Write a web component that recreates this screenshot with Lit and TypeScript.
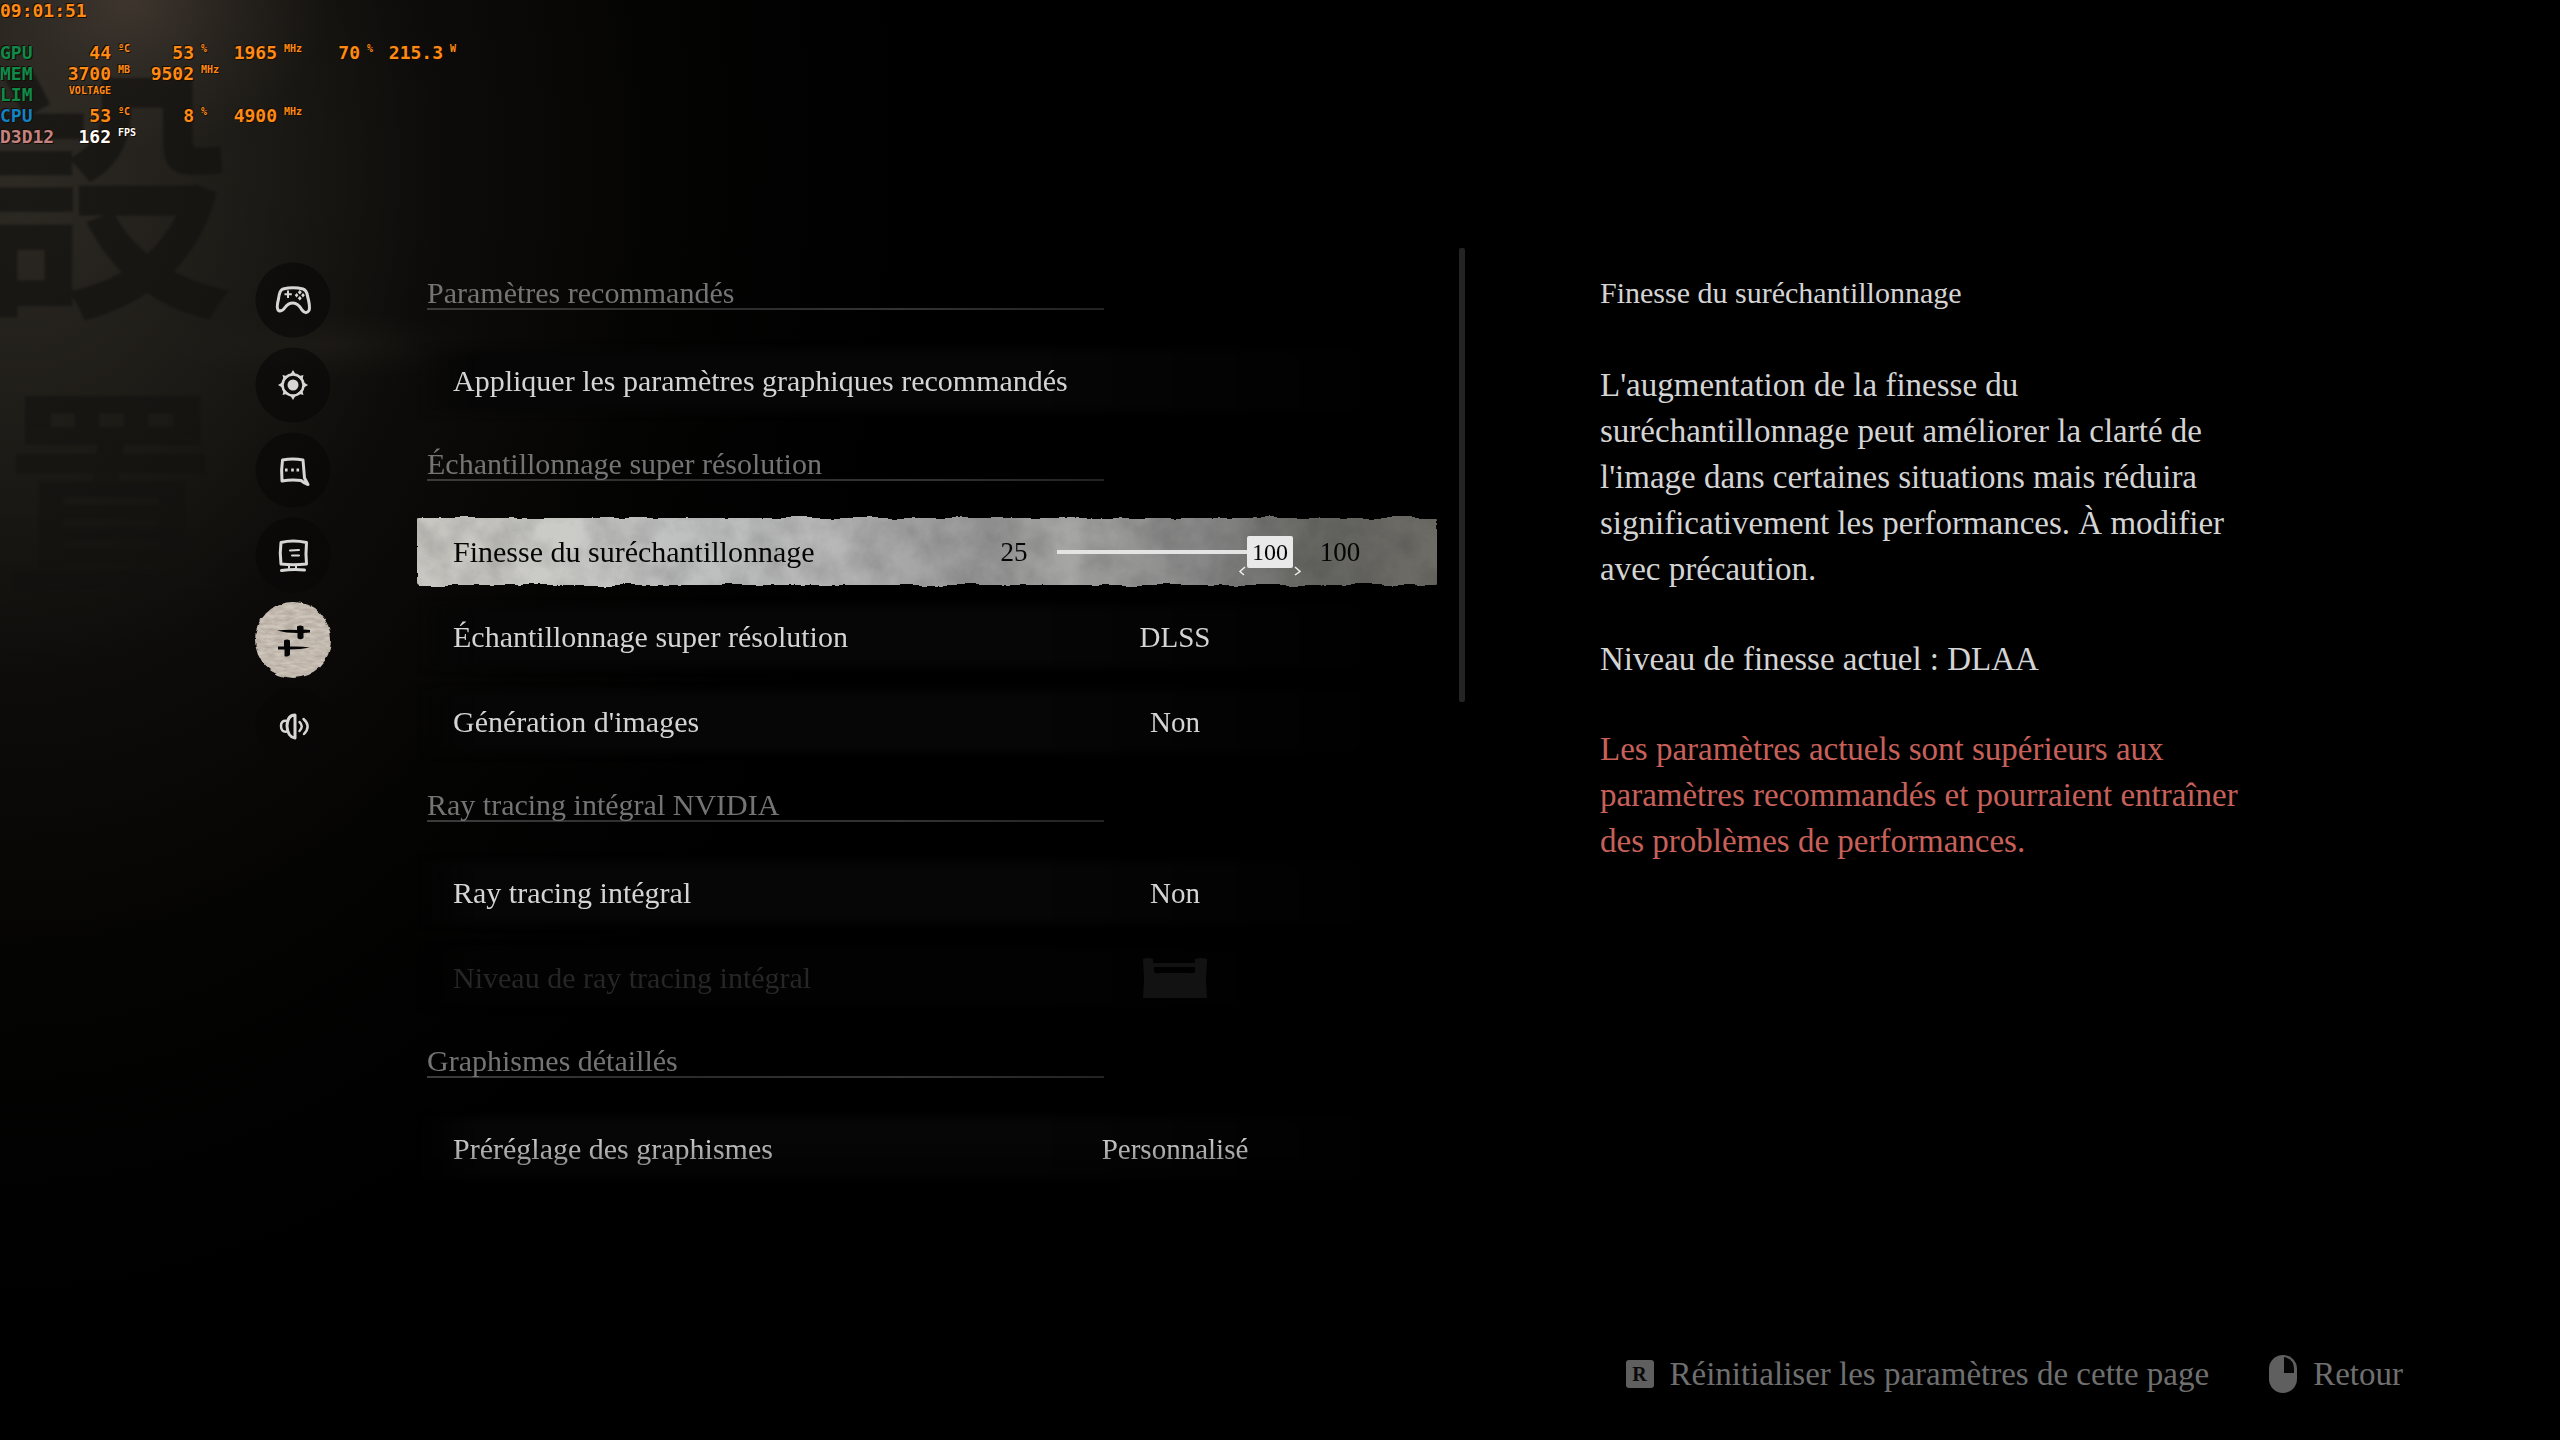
import { LitElement, html, svg, css, nothing } from "lit";
import { customElement, property, state } from "lit/decorators.js";

type Cell = [value: string, unit: string, small?: boolean] | null;

interface HudRow {
  label: string;
  tone: string;
  cells: Cell[];
}

const HUD_ROWS: HudRow[] = [
  { label: "GPU", tone: "green", cells: [["44", "ºC"], ["53", "%"], ["1965", "MHz"], ["70", "%"], ["215.3", "W"]] },
  { label: "MEM", tone: "green", cells: [["3700", "MB"], ["9502", "MHz"], null, null, null] },
  { label: "LIM", tone: "green", cells: [["VOLTAGE", "", true], null, null, null, null] },
  { label: "CPU", tone: "blue", cells: [["53", "ºC"], ["8", "%"], ["4900", "MHz"], null, null] },
  { label: "D3D12", tone: "pink", cells: [["162", "FPS"], null, null, null, null] },
];

type Entry =
  | { kind: "heading"; label: string }
  | { kind: "action"; label: string }
  | { kind: "slider"; label: string; min: number; max: number; value: number }
  | { kind: "choice"; label: string; value: string }
  | { kind: "locked"; label: string };

const ENTRIES: Entry[] = [
  { kind: "heading", label: "Paramètres recommandés" },
  { kind: "action", label: "Appliquer les paramètres graphiques recommandés" },
  { kind: "heading", label: "Échantillonnage super résolution" },
  { kind: "slider", label: "Finesse du suréchantillonnage", min: 25, max: 100, value: 100 },
  { kind: "choice", label: "Échantillonnage super résolution", value: "DLSS" },
  { kind: "choice", label: "Génération d'images", value: "Non" },
  { kind: "heading", label: "Ray tracing intégral NVIDIA" },
  { kind: "choice", label: "Ray tracing intégral", value: "Non" },
  { kind: "locked", label: "Niveau de ray tracing intégral" },
  { kind: "heading", label: "Graphismes détaillés" },
  { kind: "choice", label: "Préréglage des graphismes", value: "Personnalisé" },
];

const ICONS = [
  svg`<g fill="none" stroke="currentColor" stroke-width="3" stroke-linejoin="round">
      <path d="M28 27Q38 24.500 48 27Q51.500 28 52.500 34Q55.500 45 54 48.500Q51 53 47 48Q43 41 38 41Q33 41 30 45.500Q27 50 23.500 48.500Q21 46.500 23.500 37Q24.500 28 28 27Z"/>
      <path stroke-width="2" d="M33 28.500V36M29.500 32.200H36.800"/></g>
    <path fill="currentColor" d="M44.800 28l2 2.200-2 2.200-2-2.200zM44.800 34l2 2.200-2 2.200-2-2.200zM41.600 31l1.800 2.200-1.800 2.200-1.800-2.200zM48 31l1.800 2.200-1.800 2.200-1.800-2.200z"/>`,
  svg`<circle cx="38" cy="38" r="10.500" fill="none" stroke="currentColor" stroke-width="2.500"/>
    <circle cx="38" cy="38" r="5.500" fill="currentColor"/>
    <path fill="currentColor" d="M38 23l3 5h-6zM38 53l3-5h-6zM23 38l5-3v6zM53 38l-5-3v6zM27.500 28l6 1.500-4.500 4.500zM48.500 28l-6 1.500 4.500 4.500zM27.500 48l6-1.500-4.500-4.500zM48.500 48l-6-1.500 4.500-4.500z"/>`,
  svg`<path fill="none" stroke="currentColor" stroke-width="3" stroke-linejoin="round" d="M27.500 28Q38 26 48 28L49.500 46L53 52.500Q49 51 46 48.500Q36 47.500 27 49Q26 38 27.500 28Z"/>
    <path fill="currentColor" d="M30 36.500h2.600v3H30zM36.200 36.500h2.600v3h-2.600zM41.500 36.500h2.600v3h-2.600z"/>`,
  svg`<g fill="none" stroke="currentColor" stroke-linecap="round" stroke-linejoin="round">
      <path stroke-width="3" d="M26 25.500Q38 22.500 51.500 25.500Q50.500 37 51.500 47Q38 48.500 26 47Q24.500 36 26 25.500Z"/>
      <path stroke-width="2" d="M35 33.500L44 33M37 38.500H44M34 48v3M41 48v3"/>
      <path stroke-width="3" d="M26.500 53.500Q38 52 49.500 53"/></g>`,
  svg`<g fill="currentColor"><path d="M22 28.500Q31 27.500 42 28V24.500Q45 22.500 48.500 24.500V27.500L55 28V30.500L48.500 31V36Q45 38.500 42.500 36V31Q31 31 22 28.500Z"/>
      <path d="M23 44.500L29 44.500V38.500Q32 36.500 35 38.500V44.500Q46 44 55 45.500Q46 47.500 35 47.500V53Q32 55.500 29.500 54V47.500L23 47.500Z"/></g>`,
  svg`<g fill="none" stroke="currentColor" stroke-linecap="round" stroke-linejoin="round">
      <path stroke-width="2.500" d="M32 34Q26 33 26 39Q26 45.500 32 44.500"/>
      <path stroke-width="3" d="M40 28Q32.500 28 32 39Q32.500 50 40 51Z"/>
      <path stroke-width="2.500" d="M44.500 35Q49 39 44.500 44M48.500 32Q56.500 39 49 47"/></g>`,
];

/** Performance overlay drawn in the top left corner. */
@customElement("perf-overlay")
export class PerfOverlay extends LitElement {
  static styles = css`
    :host {
      display: block;
      font: bold 18px/21px "DejaVu Sans Mono", "Liberation Mono", monospace;
      color: #ff8a14;
      text-shadow: 1px 1px 0 #160c02, -1px -1px 0 #160c02;
    }
    .clock {
      display: block;
      height: 42px;
    }
    .grid {
      border-collapse: collapse;
      table-layout: fixed;
      width: 471px;
    }
    .label-col { width: 56px; }
    .value-col { width: 55px; }
    .unit-col { width: 28px; }
    th, td {
      padding: 0;
      height: 21px;
      white-space: nowrap;
      vertical-align: top;
    }
    th { text-align: left; font-weight: bold; }
    .value { text-align: right; }
    .unit, .small {
      font-size: 10px;
      line-height: 14px;
    }
    .unit { padding-left: 7px; }
    .green { color: #0e8a4a; }
    .blue { color: #1282c4; }
    .pink { color: #c48484; }
    .white { color: #fff; }
  `;

  render() {
    return html`
      <time class="clock">09:01:51</time>
      <table class="grid">
        <colgroup>
          <col class="label-col" />
          ${[0, 1, 2, 3, 4].map(() => html`<col class="value-col" /><col class="unit-col" />`)}
        </colgroup>
        <tbody>
          ${HUD_ROWS.map(
            (row) => html`<tr class=${row.tone === "pink" ? "white" : ""}>
              <th scope="row" class=${row.tone}>${row.label}</th>
              ${row.cells.map((c) =>
                c
                  ? html`<td class="value ${c[2] ? "small" : ""}">${c[0]}</td><td class="unit">${c[1]}</td>`
                  : html`<td></td><td></td>`
              )}
            </tr>`
          )}
        </tbody>
      </table>
    `;
  }
}

/** Round category button; the selected one sits on a paper disc. */
@customElement("category-button")
export class CategoryButton extends LitElement {
  @property({ type: Number }) icon = 0;
  @property({ type: Boolean }) active = false;

  static styles = css`
    :host { display: block; }
    .button {
      display: block;
      width: 76px;
      height: 76px;
      padding: 0;
      border: 0;
      background: none;
      color: #d6d6d4;
      cursor: pointer;
    }
    .button.active { color: #050505; }
    .art { display: block; width: 76px; height: 76px; overflow: visible; }
  `;

  render() {
    return html`<button class="button ${this.active ? "active" : ""}" aria-pressed=${this.active}>
      <svg class="art" viewBox="0 0 76 76" aria-hidden="true">
        <defs>
          <filter id="disc" x="-5%" y="-5%" width="110%" height="110%" color-interpolation-filters="sRGB">
            <feTurbulence type="fractalNoise" baseFrequency="0.1" numOctaves="3" seed="4" result="n" />
            <feDisplacementMap in="SourceGraphic" in2="n" scale="4" xChannelSelector="R" yChannelSelector="G" result="d" />
            <feTurbulence type="fractalNoise" baseFrequency="0.1 0.3" numOctaves="3" seed="9" result="g" />
            <feColorMatrix in="g" values="0 0 0 0 0.35  0 0 0 0 0.3  0 0 0 0 0.26  0.4 0 0 0 -0.1" result="t" />
            <feComposite in="t" in2="d" operator="in" result="tt" />
            <feMerge><feMergeNode in="d" /><feMergeNode in="tt" /></feMerge>
          </filter>
        </defs>
        ${this.active
          ? svg`<circle cx="38" cy="38" r="38" fill="#cfc6bc" filter="url(#disc)"/>`
          : svg`<circle cx="38" cy="38" r="37.500" fill="#080706" opacity="0.6"/>`}
        ${ICONS[this.icon]}
      </svg>
    </button>`;
  }
}

/** List of settings with its headings, rows and controls. */
@customElement("settings-list")
export class SettingsList extends LitElement {
  @state() private level = 100;

  static styles = css`
    :host {
      display: block;
      font: 30px/40px "Liberation Serif", serif;
      color: #d4d4d4;
    }
    .list {
      display: flex;
      flex-direction: column;
      mask-image: linear-gradient(#000 0, #000 884px, rgba(0, 0, 0, 0.45) 930px);
    }
    .heading {
      box-sizing: border-box;
      height: 86px;
      margin: 0;
      padding: 26px 0 0 10px;
      font: inherit;
      line-height: 30px;
      color: #747474;
    }
    .heading::after {
      content: "";
      display: block;
      width: 67%;
      height: 2px;
      background: linear-gradient(90deg, #3c3c3c, #2b2b2b 40%, #333 70%, #222);
    }
    .row {
      position: relative;
      display: flex;
      align-items: center;
      box-sizing: border-box;
      height: 85px;
      padding: 0 74px 0 36px;
    }
    .row::before {
      content: "";
      position: absolute;
      inset: 12px 0;
      background: linear-gradient(90deg, transparent, #060606 6%, #060606 60%, transparent 96%);
      filter: blur(4px);
    }
    .row.selected { color: #050505; }
    .row.selected::before { display: none; }
    .row.locked { color: #262626; }
    .row.locked::before { opacity: 0.4; }
    .paper {
      position: absolute;
      inset: 9px 0;
      width: 100%;
      height: 67px;
      overflow: visible;
    }
    .label { position: relative; flex: 1; }
    .action, .choice, .lock {
      position: relative;
      padding: 0;
      border: 0;
      background: none;
      color: inherit;
      font: inherit;
    }
    .action { text-align: left; cursor: pointer; }
    .choice {
      appearance: none;
      width: 376px;
      font-size: 29px;
      text-align: center;
      text-align-last: center;
      cursor: pointer;
    }
    .choice option { color: #d4d4d4; background: #000; }
    .lock {
      display: flex;
      justify-content: center;
      width: 376px;
      color: #121212;
    }
    .slider {
      position: relative;
      display: grid;
      grid-template-columns: 54px 236px 46px;
      column-gap: 16px;
      width: 376px;
      font-size: 27px;
      text-align: center;
    }
    .slider .max { margin-left: 8px; margin-right: -8px; }
    .track { position: relative; display: flex; align-items: center; }
    .range {
      appearance: none;
      width: 100%;
      height: 32px;
      margin: 0;
      background: linear-gradient(#e4e4e4, #e4e4e4) center / 100% 4px no-repeat;
      cursor: pointer;
    }
    .range::-webkit-slider-thumb {
      appearance: none;
      width: 46px;
      height: 32px;
      background: #e9e9e9;
      border-radius: 2px;
    }
    .bubble {
      position: absolute;
      width: 46px;
      font-size: 24px;
      line-height: 32px;
      transform: translateX(-50%);
      pointer-events: none;
    }
    .arrows {
      position: absolute;
      top: 16px;
      left: -8px;
      width: 62px;
      height: 24px;
      overflow: visible;
    }
  `;

  private renderPaper() {
    return html`<svg class="paper" aria-hidden="true">
      <defs>
        <linearGradient id="tone">
          <stop offset="0" stop-color="#c8c7c1" />
          <stop offset="0.15" stop-color="#cbcbc8" />
          <stop offset="0.26" stop-color="#bfc0c0" />
          <stop offset="0.4" stop-color="#b9b9b9" />
          <stop offset="0.56" stop-color="#959595" />
          <stop offset="0.64" stop-color="#a6a6a5" />
          <stop offset="0.78" stop-color="#858585" />
          <stop offset="0.88" stop-color="#676763" />
          <stop offset="1" stop-color="#6d6c66" />
        </linearGradient>
        <filter id="rough" x="-1%" y="-10%" width="102%" height="120%" color-interpolation-filters="sRGB">
          <feTurbulence type="fractalNoise" baseFrequency="0.03 0.03" numOctaves="5" seed="7" result="n" />
          <feDisplacementMap in="SourceGraphic" in2="n" scale="8" xChannelSelector="R" yChannelSelector="G" result="d" />
          <feTurbulence type="fractalNoise" baseFrequency="0.03 0.03" numOctaves="6" seed="12" result="g" />
          <feColorMatrix in="g" values="0 0 0 0 0.1  0 0 0 0 0.1  0 0 0 0 0.1  0.3 0 0 0 -0.1" result="t" />
          <feComposite in="t" in2="d" operator="in" result="tt" />
          <feMerge><feMergeNode in="d" /><feMergeNode in="tt" /></feMerge>
        </filter>
      </defs>
      <rect width="100%" height="67" rx="3" fill="url(#tone)" filter="url(#rough)" />
    </svg>`;
  }

  private renderEntry(e: Entry, i: number) {
    const id = `entry-${i}`;
    switch (e.kind) {
      case "heading":
        return html`<h2 class="heading">${e.label}</h2>`;
      case "action":
        return html`<div class="row"><button class="action">${e.label}</button></div>`;
      case "choice":
        return html`<div class="row">
          <label class="label" for=${id}>${e.label}</label>
          <select class="choice" id=${id}><option>${e.value}</option></select>
        </div>`;
      case "locked":
        return html`<div class="row locked">
          <span class="label" id=${id}>${e.label}</span>
          <button class="lock" disabled aria-labelledby=${id}>
            <svg width="66" height="40" viewBox="0 0 66 40" fill="currentColor" aria-hidden="true">
              <path d="M1 1Q6-1 11 1V5H53V1Q59-1 65 1L64 22L65 40H1L2 22Z" />
              <path fill="#000" d="M12 9H53V14Q50 16 46 15H18Q14 16 12 14Z" />
            </svg>
          </button>
        </div>`;
      case "slider": {
        const ratio = (this.level - e.min) / (e.max - e.min);
        const left = 23 + ratio * 190;
        return html`<div class="row selected">
          ${this.renderPaper()}
          <label class="label" for=${id}>${e.label}</label>
          <div class="slider">
            <span>${e.min}</span>
            <div class="track">
              <input class="range" id=${id} type="range" min=${e.min} max=${e.max} .value=${String(this.level)}
                @input=${(ev: Event) => (this.level = Number((ev.target as HTMLInputElement).value))} />
              <output class="bubble" for=${id} style="left:${left}px">${this.level}
                <svg class="arrows" viewBox="0 0 62 24" fill="none" stroke="#eee" stroke-width="1.500" aria-hidden="true">
                  <path d="M6 15L1 19.500L5 23M56 15L61 19.500L56 23" />
                </svg>
              </output>
            </div>
            <span class="max">${e.max}</span>
          </div>
        </div>`;
      }
      default:
        return nothing;
    }
  }

  render() {
    return html`<div class="list">${ENTRIES.map((e, i) => this.renderEntry(e, i))}</div>`;
  }
}

@customElement("app-root")
export class AppRoot extends LitElement {
  static styles = css`
    :host {
      display: block;
      font-family: "Liberation Serif", serif;
      color: #d4d4d4;
      background: #000;
    }
    .screen {
      position: relative;
      display: flex;
      flex-direction: column;
      box-sizing: border-box;
      min-height: 100vh;
      overflow: hidden;
      background:
        radial-gradient(ellipse 160px 34px at 330px 345px, rgba(70, 62, 52, 0.16), rgba(70, 62, 52, 0.05) 60%, transparent),
        radial-gradient(ellipse 200px 150px at 130px 0, rgba(96, 80, 70, 0.45), rgba(96, 80, 70, 0.14) 55%, transparent),
        radial-gradient(ellipse 640px 780px at 20px 170px, rgba(52, 48, 42, 0.8), rgba(40, 37, 31, 0.6) 35%, rgba(22, 20, 17, 0.35) 65%, transparent),
        radial-gradient(ellipse 900px 1150px at 0 150px, #14130f, #080706 50%, transparent),
        #000;
    }
    .brush {
      position: absolute;
      top: 30px;
      left: -32px;
      display: flex;
      flex-direction: column;
      font: 700 268px/300px "Noto Sans CJK TC", sans-serif;
      color: #12110f;
      opacity: 0.65;
      filter: blur(1px);
      mask-image: linear-gradient(#000 50%, rgba(0, 0, 0, 0.6));
    }
    .second {
      padding-left: 34px;
      font-size: 220px;
    }
    .overlay { position: absolute; top: 0; left: 0; }
    .main {
      flex: 1;
      position: relative;
      display: grid;
      grid-template-columns: 76px minmax(0, 1fr) 6px 791px;
      align-items: start;
      padding: 248px 304px 0 255px;
    }
    .nav {
      display: flex;
      flex-direction: column;
      gap: 9px;
      padding-top: 14px;
    }
    .list { margin: 4px 22px 0 86px; }
    .scroll {
      height: 454px;
      background: #242424;
      border-radius: 2px;
    }
    .panel {
      padding: 22px 0 0 135px;
      font-size: 33px;
      line-height: 46px;
    }
    .title {
      margin: 0 0 46px;
      font-size: 30px;
      font-weight: normal;
    }
    .text { margin: 0 0 44px; }
    .warning { color: #c8605a; }
    .footer {
      position: relative;
      display: flex;
      justify-content: flex-end;
      gap: 60px;
      padding: 0 157px 43px;
    }
    .hint {
      display: flex;
      align-items: center;
      gap: 16px;
      padding: 0;
      border: 0;
      background: none;
      font: 33px/46px "Liberation Serif", serif;
      color: #6f6f6f;
      cursor: pointer;
    }
    .key {
      width: 28px;
      border-radius: 3px;
      background: #5f5f5f;
      color: #0a0a0a;
      font: bold 20px/28px "Liberation Serif", serif;
      text-align: center;
    }
  `;

  render() {
    return html`<div class="screen">
      <div class="brush" lang="zh-Hant"><span>設</span><span class="second">置</span></div>
      <perf-overlay class="overlay"></perf-overlay>
      <main class="main">
        <nav class="nav">
          ${ICONS.map((_, i) => html`<category-button .icon=${i} ?active=${i === 4}></category-button>`)}
        </nav>
        <settings-list class="list"></settings-list>
        <div class="scroll"></div>
        <section class="panel">
          <h1 class="title">Finesse du suréchantillonnage</h1>
          <p class="text">L'augmentation de la finesse du suréchantillonnage peut améliorer la clarté de l'image dans certaines situations mais réduira significativement les performances. À modifier avec précaution.</p>
          <p class="text">Niveau de finesse actuel : DLAA</p>
          <p class="text warning">Les paramètres actuels sont supérieurs aux paramètres recommandés et pourraient entraîner des problèmes de performances.</p>
        </section>
      </main>
      <footer class="footer">
        <button class="hint"><span class="key">R</span>Réinitialiser les paramètres de cette page</button>
        <button class="hint">
          <svg width="28" height="38" viewBox="0 0 28 38" aria-hidden="true">
            <rect width="28" height="38" rx="14" fill="#5f5f5f" />
            <path d="M15 2Q25 4 25 14V18H15Z" fill="#050505" />
          </svg>
          Retour
        </button>
      </footer>
    </div>`;
  }
}
